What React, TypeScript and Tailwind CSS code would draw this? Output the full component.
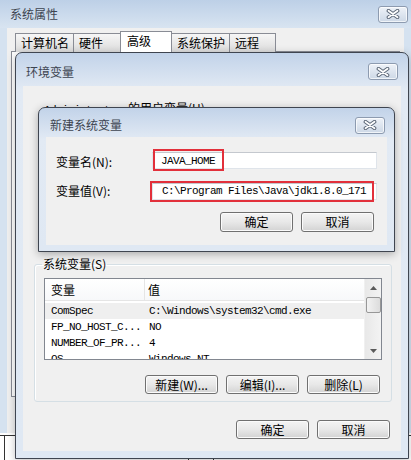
import React from "react";

const mono = "font-['Liberation_Mono',monospace] text-[11px] tracking-[-0.6px]";

function CloseBtn() {
  return (
    <div className="w-[30px] h-[17px] rounded-[3px] border border-[#8d9bb0] bg-gradient-to-b from-[#eef2f8] to-[#cdd8e6] shadow-[inset_0_0_0_1px_rgba(255,255,255,0.7)] flex items-center justify-center">
      <svg width="14" height="10" viewBox="0 0 14 10">
        <path d="M2.5 1.8 L11.5 8.2 M11.5 1.8 L2.5 8.2" stroke="#5d6878" strokeWidth="3.8" strokeLinecap="round" />
        <path d="M2.5 1.8 L11.5 8.2 M11.5 1.8 L2.5 8.2" stroke="#ffffff" strokeWidth="1.8" strokeLinecap="round" />
      </svg>
    </div>
  );
}

function Btn({ children, className }: { children: React.ReactNode; className: string }) {
  return (
    <div
      className={
        "flex items-center justify-center rounded-[3px] border border-[#707070] bg-gradient-to-b from-[#f4f4f4] via-[#e8e8e8] to-[#d3d3d3] shadow-[inset_0_0_0_1px_#fbfbfb] " +
        className
      }
    >
      {children}
    </div>
  );
}

function Tab({ label, w, selected }: { label: string; w: string; selected?: boolean }) {
  if (selected) {
    return (
      <div className={"relative z-10 -ml-px h-[21px] border border-b-0 border-[#898c95] bg-white pl-[6px] leading-[18px] " + w}>
        {label}
      </div>
    );
  }
  return (
    <div className={"-ml-px first:ml-0 h-[19px] border border-b-0 border-[#898c95] bg-gradient-to-b from-[#f6f6f6] to-[#dcdcdc] pl-[5px] leading-[18px] " + w}>
      {label}
    </div>
  );
}

const rows = [
  ["ComSpec", "C:\\Windows\\system32\\cmd.exe"],
  ["FP_NO_HOST_C...", "NO"],
  ["NUMBER_OF_PR...", "4"],
  ["OS", "Windows_NT"],
];

export default function App() {
  return (
    <div className="relative w-[411px] h-[460px] overflow-hidden bg-white font-['Noto_Sans_CJK_SC','Noto_Sans',sans-serif] text-[12px] leading-[14px] text-black">
      {/* what lies behind the dialogs */}
      <div className="absolute left-0 top-[435px] w-full h-px bg-[#333]" />
      <div className="absolute left-[4px] top-[435px] bottom-0 w-px bg-[#333]" />
      <div className="absolute left-[188px] top-[435px] bottom-0 w-px bg-[#333]" />
      <div className="absolute left-[213px] top-[435px] bottom-0 w-px bg-[#333]" />

      {/* 系统属性 */}
      <div className="absolute left-0 top-0 w-[411px] h-[433px] flex flex-col bg-[#d5e2f0]">
        <div className="h-[28px] shrink-0 flex items-center justify-between pl-[10px] pr-[3px] bg-gradient-to-b from-[#bdd0e7] to-[#d8e4f1]">
          <span className="text-[#3d4450]">系统属性</span>
          <CloseBtn />
        </div>
        <div className="mx-[7px] flex-1 bg-[#f0f0f0]">
          <div className="flex items-end pl-[8px] pt-[3px]">
            <Tab label="计算机名" w="w-[59px]" />
            <Tab label="硬件" w="w-[48px]" />
            <Tab label="高级" w="w-[52px]" selected />
            <Tab label="系统保护" w="w-[59px]" />
            <Tab label="远程" w="w-[47px]" />
          </div>
          <div className="-mt-px ml-[4px] mr-[4px] h-[346px] border border-[#898c95] bg-white" />
        </div>
      </div>

      {/* 环境变量 */}
      <div className="absolute left-[15px] top-[52px] w-[394px] h-[407px] flex flex-col rounded-t-[7px] border border-[#3f4550] bg-gradient-to-b from-[#c2d3e9] via-[#e2eaf4] via-[9%] to-[#dfe8f3] shadow-[0_2px_8px_rgba(0,0,0,0.25)]">
        <div className="h-[33px] shrink-0 flex items-center justify-between pt-[4px] pl-[10px] pr-[10px]">
          <span className="text-[#3d4450]">环境变量</span>
          <CloseBtn />
        </div>
        <div className="mx-[7px] mb-[7px] flex-1 flex flex-col bg-[#f0f0f0]">
          <div className="pt-[15px] pl-[21px] h-[26px] whitespace-nowrap">
            <span className={mono}>Administrator </span>
            <span>的用户变量(U)</span>
          </div>

          <fieldset className="mt-[145px] ml-[11px] w-[358px] border border-[#d5dfe5] rounded-[3px] px-[9px] pb-[7px] shadow-[inset_1px_1px_0_#fff]">
            <legend className="ml-[-2px] px-[1px]">系统变量(S)</legend>
            <div className="mt-[7px] h-[82px] flex border border-[#828790] bg-white overflow-hidden">
              <div className="flex-1 flex flex-col">
                <div className="h-[22px] shrink-0 flex border-b border-[#e5e5e5] bg-gradient-to-b from-white to-[#f7f8fa]">
                  <div className="w-[100px] pl-[6px] flex items-center border-r border-[#e5e5e5]">变量</div>
                  <div className="pl-[3px] flex items-center">值</div>
                </div>
                <div className="pt-[2px]">
                  {rows.map(([k, v], i) => (
                    <div
                      key={k}
                      className={"h-[16px] flex items-center " + (i === 0 ? "bg-[#efefef]" : "")}
                    >
                      <div className={"w-[101px] pl-[6px] " + mono}>{k}</div>
                      <div className={"pl-[3px] " + mono}>{v}</div>
                    </div>
                  ))}
                </div>
              </div>
              <div className="w-[17px] shrink-0 flex flex-col items-center bg-gradient-to-r from-[#e8e8e8] to-[#f3f3f3] border-l border-[#f0f0f0]">
                <div className="h-[17px] w-full flex items-center justify-center">
                  <svg width="7" height="4" viewBox="0 0 7 4">
                    <path d="M0 4 L3.5 0 L7 4 Z" fill="#5a5a5a" />
                  </svg>
                </div>
                <div className="mt-px h-[16px] w-[15px] rounded-[2px] border border-[#979797] bg-gradient-to-r from-[#f2f2f2] to-[#dcdcdc]" />
                <div className="flex-1" />
                <div className="h-[17px] w-full flex items-center justify-center">
                  <svg width="7" height="4" viewBox="0 0 7 4">
                    <path d="M0 0 L3.5 4 L7 0 Z" fill="#5a5a5a" />
                  </svg>
                </div>
              </div>
            </div>
            <div className="mt-[15px] flex justify-end gap-[8px] pr-[2px]">
              <Btn className="w-[73px] h-[19px]">新建(W)...</Btn>
              <Btn className="w-[73px] h-[19px]">编辑(I)...</Btn>
              <Btn className="w-[73px] h-[19px]">删除(L)</Btn>
            </div>
          </fieldset>

          <div className="mt-[18px] flex justify-end gap-[8px] pr-[11px]">
            <Btn className="w-[73px] h-[19px]">确定</Btn>
            <Btn className="w-[73px] h-[19px]">取消</Btn>
          </div>
        </div>
      </div>

      {/* 新建系统变量 */}
      <div className="absolute left-[38px] top-[107px] w-[357px] h-[145px] flex flex-col rounded-t-[7px] border border-[#3f4550] bg-gradient-to-b from-[#c2d3e9] via-[#e2eaf4] via-[22%] to-[#dfe8f3] shadow-[0_2px_8px_rgba(0,0,0,0.3)]">
        <div className="h-[29px] shrink-0 flex items-center justify-between pt-[5px] pl-[11px] pr-[9px]">
          <span className="text-[#3d4450]">新建系统变量</span>
          <CloseBtn />
        </div>
        <div className="mx-[7px] mb-[6px] flex-1 flex flex-col bg-[#f0f0f0] pt-[13px] pl-[10px] pr-[10px]">
          <div className="h-[21px] flex items-center">
            <div className="w-[96px] pt-[2px]">变量名(N):</div>
            <div className="relative w-[225px] h-[17px] bg-white border border-[#dfe4ea] border-t-[#c4c8ce] flex items-center pl-[8px]">
              <span className={mono}>JAVA_HOME</span>
              <div className="absolute left-0 top-[-4px] w-[71px] h-[22px] border-2 border-[#e2303b]" />
            </div>
          </div>
          <div className="mt-[10px] h-[20px] flex items-center">
            <div className="w-[96px]">变量值(V):</div>
            <div className="relative w-[225px] h-[17px] bg-white border border-[#dfe4ea] border-t-[#c4c8ce] flex items-center pl-[9px]">
              <span className={mono}>C:\Program Files\Java\jdk1.8.0_171</span>
              <div className="absolute left-[-3px] top-[-3px] w-[224px] h-[21px] border-2 border-[#e2303b]" />
            </div>
          </div>
          <div className="mt-[11px] flex justify-end gap-[8px] pr-[3px]">
            <Btn className="w-[73px] h-[20px]">确定</Btn>
            <Btn className="w-[73px] h-[20px]">取消</Btn>
          </div>
        </div>
      </div>
    </div>
  );
}
